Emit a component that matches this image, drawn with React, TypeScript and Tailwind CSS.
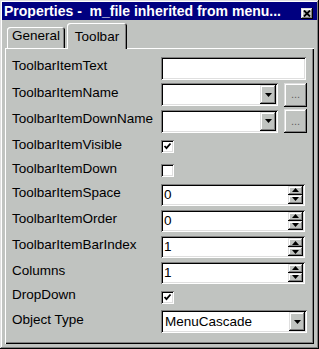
import React from 'react';

const raised =
  'bg-[#c0c3c0] shadow-[inset_-1px_-1px_#000,inset_1px_1px_#dfdfdf,inset_-2px_-2px_#808080,inset_2px_2px_#fff]';
const sunken =
  'bg-white shadow-[inset_1px_1px_#808080,inset_-1px_-1px_#fff,inset_2px_2px_#000,inset_-2px_-2px_#dfdfdf]';

function DownArrow() {
  return (
    <svg width="7" height="4" viewBox="0 0 7 4">
      <polygon points="0,0 7,0 3.5,4" fill="#000" />
    </svg>
  );
}

function Combo({ value, width }: { value?: string; width: string }) {
  return (
    <div className={`${sunken} ${width} h-[23px] flex items-center p-[2px]`}>
      <span className="flex-1 pl-[2px] text-[13.5px] text-black leading-none">{value}</span>
      <div className={`${raised} w-[16px] h-full flex items-center justify-center`}>
        <DownArrow />
      </div>
    </div>
  );
}

function Ellipsis() {
  return (
    <div className={`${raised} ml-[6px] w-[23px] h-[24px] flex items-center justify-center text-[11px] text-[#606060] leading-none`}>
      ...
    </div>
  );
}

function Spin({ value }: { value: string }) {
  return (
    <div className={`${sunken} w-[144px] h-[22px] flex items-stretch p-[2px]`}>
      <span className="flex-1 self-center pl-[1px] text-[13.5px] text-black leading-none">{value}</span>
      <div className="w-[15px] flex flex-col">
        <div className={`${raised} flex-1 flex items-center justify-center`}>
          <svg width="7" height="4" viewBox="0 0 7 4">
            <polygon points="0,4 7,4 3.5,0" fill="#000" />
          </svg>
        </div>
        <div className={`${raised} flex-1 flex items-center justify-center`}>
          <svg width="7" height="4" viewBox="0 0 7 4">
            <polygon points="0,0 7,0 3.5,4" fill="#000" />
          </svg>
        </div>
      </div>
    </div>
  );
}

function Check({ checked }: { checked: boolean }) {
  return (
    <div className={`${sunken} w-[13px] h-[13px] flex items-center justify-center`}>
      {checked && (
        <svg width="9" height="9" viewBox="0 0 9 9">
          <polyline points="1.5,4 3.5,6.2 7.5,1.5" fill="none" stroke="#000" strokeWidth="1.8" />
        </svg>
      )}
    </div>
  );
}

interface Row {
  label: string;
  h: string;
  control: React.ReactNode;
}

export default function App() {
  const rows: Row[] = [
    { label: 'ToolbarItemText', h: 'h-[26px]', control: <div className={`${sunken} w-[145px] h-[23px]`} /> },
    {
      label: 'ToolbarItemName',
      h: 'h-[27px]',
      control: (
        <div className="flex items-center">
          <Combo width="w-[117px]" />
          <Ellipsis />
        </div>
      ),
    },
    {
      label: 'ToolbarItemDownName',
      h: 'h-[26px]',
      control: (
        <div className="flex items-center">
          <Combo width="w-[117px]" />
          <Ellipsis />
        </div>
      ),
    },
    { label: 'ToolbarItemVisible', h: 'h-[25px]', control: <Check checked /> },
    { label: 'ToolbarItemDown', h: 'h-[23px]', control: <Check checked={false} /> },
    { label: 'ToolbarItemSpace', h: 'h-[25px]', control: <Spin value="0" /> },
    { label: 'ToolbarItemOrder', h: 'h-[27px]', control: <Spin value="0" /> },
    { label: 'ToolbarItemBarIndex', h: 'h-[26px]', control: <Spin value="1" /> },
    { label: 'Columns', h: 'h-[25px]', control: <Spin value="1" /> },
    { label: 'DropDown', h: 'h-[24px]', control: <Check checked /> },
    { label: 'Object Type', h: 'h-[25px]', control: <Combo value="MenuCascade" width="w-[146px]" /> },
  ];

  return (
    <div className="w-[319px] h-[349px] p-[2px] flex flex-col bg-[#c0c3c0] shadow-[inset_-1px_-1px_#000,inset_1px_1px_#dfdfdf,inset_-2px_-2px_#808080,inset_2px_2px_#fff] font-['Liberation_Sans',Arial,sans-serif] overflow-hidden">
      {/* Title bar */}
      <div className="h-[18px] bg-[#000080] flex items-center pl-[2px] pr-[4px]">
        <span className="flex-1 text-white font-bold text-[14px] leading-none whitespace-pre overflow-hidden">
          Properties -  m_file inherited from menu...
        </span>
        <div className={`${raised} w-[12px] h-[11px] mt-[4px] flex items-center justify-center`}>
          <svg width="8" height="7" viewBox="0 0 8 7">
            <path d="M1 0.5 L7 6.5 M7 0.5 L1 6.5" stroke="#000" strokeWidth="1.8" />
          </svg>
        </div>
      </div>

      {/* Tabs */}
      <div className="h-[28px] flex items-end pl-[5px] relative z-10">
        <div className="w-[58px] h-[21px] rounded-t-[3px] shadow-[inset_1px_1px_#fff,inset_-1px_0_#000,inset_-2px_0_#808080] flex items-center justify-center pb-[2px] text-[13.5px] text-black">
          General
        </div>
        <div className="ml-[2px] w-[60px] h-[26px] -mb-[1px] bg-[#c0c3c0] rounded-t-[3px] shadow-[inset_1px_1px_#fff,inset_-1px_0_#000,inset_-2px_0_#808080] flex items-start justify-center pt-[4px] text-[13.5px] text-black">
          Toolbar
        </div>
      </div>

      {/* Pane */}
      <div className="mx-[3px] h-[296px] pt-[7px] pl-[7px] shadow-[inset_1px_1px_#fff,inset_-1px_-1px_#000,inset_-2px_-2px_#808080]">
        {rows.map((row) => (
          <div key={row.label} className={`${row.h} flex items-center`}>
            <span className="w-[149px] pb-[4px] text-[13.5px] text-black leading-none whitespace-nowrap">{row.label}</span>
            {row.control}
          </div>
        ))}
      </div>
    </div>
  );
}
